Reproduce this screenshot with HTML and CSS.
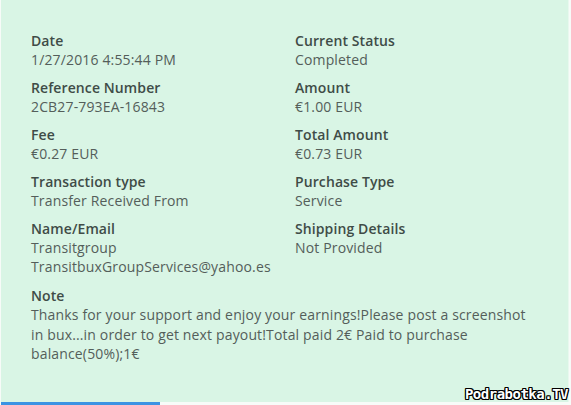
FILE: index.html
```html
<!DOCTYPE html>
<html>
<head>
<meta charset="utf-8">
<link rel="stylesheet" href="styles.css">
</head>
<body>
<div class="panel">
  <div class="grid">
    <div class="field"><div class="label">Date</div><div class="value">1/27/2016 4:55:44 PM</div></div>
    <div class="field"><div class="label">Current Status</div><div class="value">Completed</div></div>
    <div class="field"><div class="label">Reference Number</div><div class="value">2CB27-793EA-16843</div></div>
    <div class="field"><div class="label">Amount</div><div class="value">€1.00 EUR</div></div>
    <div class="field"><div class="label">Fee</div><div class="value">€0.27 EUR</div></div>
    <div class="field"><div class="label">Total Amount</div><div class="value">€0.73 EUR</div></div>
    <div class="field"><div class="label">Transaction type</div><div class="value">Transfer Received From</div></div>
    <div class="field"><div class="label">Purchase Type</div><div class="value">Service</div></div>
    <div class="field"><div class="label">Name/Email</div><div class="value">Transitgroup<br>TransitbuxGroupServices@yahoo.es</div></div>
    <div class="field"><div class="label">Shipping Details</div><div class="value">Not Provided</div></div>
  </div>
  <div class="note">
    <div class="label">Note</div>
    <div class="value">Thanks for your support and enjoy your earnings!Please post a screenshot in bux...in order to get next payout!Total paid 2€ Paid to purchase balance(50%);1€</div>
  </div>
</div>
<div class="footer"><div class="tab"></div></div>
<div class="watermark">Podrabotka.TV</div>
</body>
</html>
```
FILE: styles.css
```css
html, body {
  margin: 0;
  padding: 0;
  background: #f7fbf8;
}
body {
  width: 571px;
  height: 405px;
  overflow: hidden;
  position: relative;
  font-family: "Open Sans", "Liberation Sans", sans-serif;
  font-size: 14px;
  line-height: 19px;
}
.panel {
  margin-left: 1px;
  width: 568px;
  height: 402px;
  box-sizing: border-box;
  background: #d9f5e5;
  padding: 31px 20px 0 30px;
  border-right: 1px solid #e9f8ef;
}
.grid {
  display: grid;
  grid-template-columns: 264px 1fr;
  row-gap: 9px;
}
.label {
  color: #3f4c47;
  font-weight: 600;
  letter-spacing: 0.1px;
}
.value {
  color: #545e5a;
  letter-spacing: 0.15px;
}
.note {
  margin-top: 10px;
  width: 505px;
}
.note .value {
  line-height: 19.5px;
}
.footer {
  height: 3px;
  padding-left: 1px;
}
.tab {
  width: 159px;
  height: 3px;
  background: #3b93e3;
}
.watermark {
  position: absolute;
  right: 3px;
  bottom: 4px;
  font-family: "DejaVu Sans Mono", monospace;
  font-weight: bold;
  font-size: 14px;
  line-height: 14px;
  color: #ffffff;
  letter-spacing: -0.5px;
  text-shadow: 1px 0 0 #000, -1px 0 0 #000, 0 1px 0 #000, 0 -1px 0 #000, 1px 1px 0 #000, -1px -1px 0 #000, 1px -1px 0 #000, -1px 1px 0 #000;
}
```
